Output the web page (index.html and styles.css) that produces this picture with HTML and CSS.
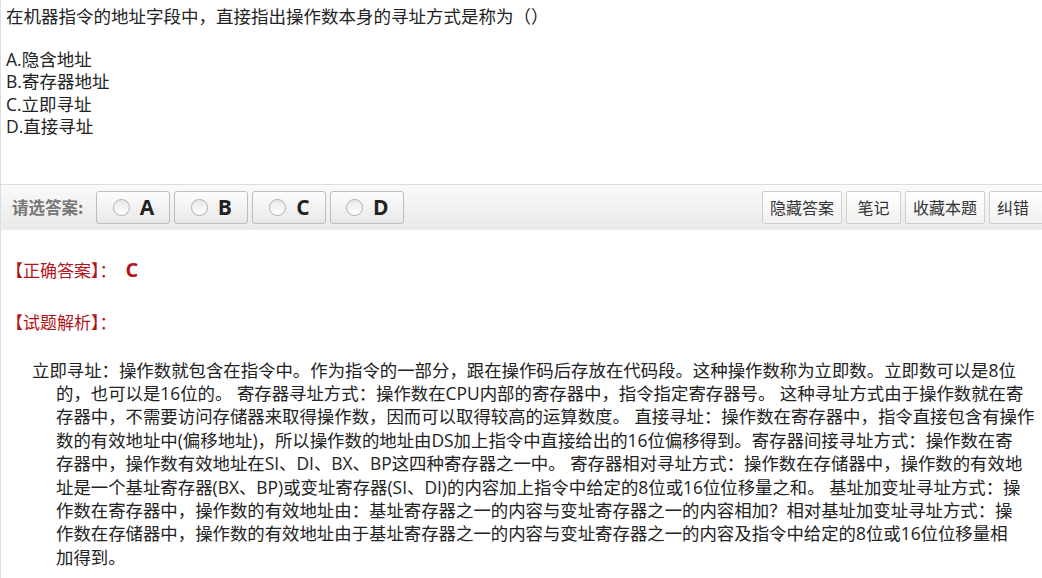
FILE: index.html
```html
<!DOCTYPE html>
<html>
<head>
    <meta charset="utf-8">
    <title>试题</title>
    <link rel="stylesheet" href="styles.css">
</head>
<body>
    <div class="page">
        <div class="question">
            <p class="stem">在机器指令的地址字段中，直接指出操作数本身的寻址方式是称为（）</p>
            <div class="options">
                <div>A.隐含地址</div>
                <div>B.寄存器地址</div>
                <div>C.立即寻址</div>
                <div>D.直接寻址</div>
            </div>
        </div>

        <div class="answer-bar">
            <div class="choose">
                <span class="choose-label">请选答案:</span>
                <button class="btn-opt"><span class="radio"></span>A</button>
                <button class="btn-opt"><span class="radio"></span>B</button>
                <button class="btn-opt"><span class="radio"></span>C</button>
                <button class="btn-opt"><span class="radio"></span>D</button>
            </div>
            <div class="tools">
                <button class="btn-tool">隐藏答案</button>
                <button class="btn-tool">笔记</button>
                <button class="btn-tool">收藏本题</button>
                <button class="btn-tool last">纠错</button>
            </div>
        </div>

        <div class="result">
            <p class="right-answer"><span class="red-label">【正确答案】：</span><span class="answer-letter">C</span></p>
            <p class="analysis-title"><span class="red-label">【试题解析】：</span></p>
            <p class="analysis">立即寻址：操作数就包含在指令中。作为指令的一部分，跟在操作码后存放在代码段。这种操作数称为立即数。立即数可以是8位<br>的，也可以是16位的。 寄存器寻址方式：操作数在CPU内部的寄存器中，指令指定寄存器号。 这种寻址方式由于操作数就在寄<br>存器中，不需要访问存储器来取得操作数，因而可以取得较高的运算数度。 直接寻址：操作数在寄存器中，指令直接包含有操作<br>数的有效地址中(偏移地址)，所以操作数的地址由DS加上指令中直接给出的16位偏移得到。寄存器间接寻址方式：操作数在寄<br>存器中，操作数有效地址在SI、DI、BX、BP这四种寄存器之一中。 寄存器相对寻址方式：操作数在存储器中，操作数的有效地<br>址是一个基址寄存器(BX、BP)或变址寄存器(SI、DI)的内容加上指令中给定的8位或16位位移量之和。 基址加变址寻址方式：操<br>作数在寄存器中，操作数的有效地址由：基址寄存器之一的内容与变址寄存器之一的内容相加？相对基址加变址寻址方式：操<br>作数在存储器中，操作数的有效地址由于基址寄存器之一的内容与变址寄存器之一的内容及指令中给定的8位或16位位移量相<br>加得到。</p>
        </div>
    </div>
</body>
</html>
```

FILE: styles.css
```css
body {
    margin: 0;
    overflow: hidden;
    font-family: "Open Sans", "Noto Sans CJK SC", sans-serif;
    color: #222;
    background: #fff;
}

.page {
    border-left: 1px solid #ddd;
    min-height: 578px;
}

.question {
    padding: 5px 0 0 5px;
    font-size: 17.5px;
    line-height: 22.5px;
}
.stem {
    margin: 0 0 20px 0;
}
.options {
    margin-bottom: 46px;
}

.answer-bar {
    display: flex;
    justify-content: space-between;
    align-items: center;
    height: 45px;
    border-top: 1px solid #dcdcdc;
    background: linear-gradient(#fafafa, #e9e9e9);
    padding-left: 11px;
}
.choose {
    display: flex;
    align-items: center;
    gap: 4px;
}
.choose-label {
    font-family: "Noto Sans CJK SC", sans-serif;
    font-size: 16.5px;
    font-weight: bold;
    color: #777;
    margin-right: 9px;
}
.btn-opt {
    display: flex;
    align-items: center;
    justify-content: center;
    gap: 10px;
    width: 74px;
    height: 33px;
    padding: 0;
    border: 1px solid #bdbdbd;
    border-radius: 3px;
    background: linear-gradient(#fdfdfd, #e8e8e8);
    font-family: "Open Sans", "DejaVu Sans", sans-serif;
    font-size: 21px;
    font-weight: bold;
    color: #222;
    cursor: pointer;
}
.radio {
    width: 15px;
    height: 15px;
    border: 1px solid #b0b0b0;
    border-radius: 50%;
    background: linear-gradient(#e8e8e8, #fff);
}

.tools {
    display: flex;
    gap: 4px;
}
.btn-tool {
    min-width: 55px;
    height: 33px;
    padding: 0 7px;
    border: 1px solid #cfcfcf;
    border-radius: 2px;
    background: linear-gradient(#ffffff, #f1f1f1);
    font-family: "Noto Sans CJK SC", sans-serif;
    font-size: 16px;
    color: #333;
    cursor: pointer;
}
.btn-tool.last {
    width: 62px;
    margin-right: -9px;
    text-align: left;
}

.result {
    padding: 28px 0 0 5px;
    font-size: 17px;
}
.result p {
    margin: 0;
}
.red-label {
    color: #b3141a;
}
.answer-letter {
    color: #b3141a;
    font-weight: bold;
    font-family: "Open Sans", "DejaVu Sans", sans-serif;
    font-size: 20px;
    margin-left: 9px;
}
.right-answer {
    line-height: 24px;
}
.analysis-title {
    margin-top: 28px !important;
    line-height: 24px;
}
.result .analysis {
    margin-top: 24px;
    padding-left: 50px;
    text-indent: -24px;
    font-size: 17.4px;
    line-height: 23.4px;
}
```
